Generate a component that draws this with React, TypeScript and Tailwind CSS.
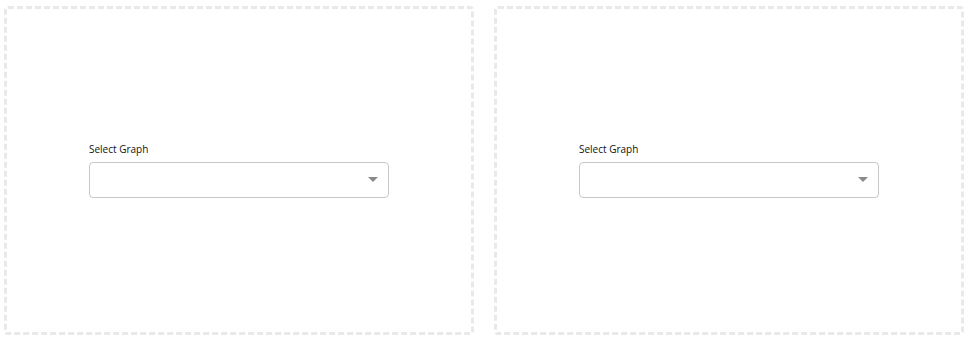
function GraphPanel() {
  return (
    <div className="flex h-[329px] w-[470px] items-center justify-center rounded-[4px] border-[3px] border-dashed border-[#e9e9e9] bg-white">
      <div className="mb-[2px] flex w-[300px] flex-col">
        <label className="mb-[5px] text-[10px] leading-[15px] text-[#111]">Select Graph</label>
        <div className="flex h-9 w-full items-center justify-end rounded-[4px] border border-[#c8c8c8] bg-white pr-[10px]">
          <svg width="10" height="5" viewBox="0 0 10 5">
            <path d="M0 0 L10 0 L5 5 Z" fill="#8a8a8a" />
          </svg>
        </div>
      </div>
    </div>
  )
}

export default function App() {
  return (
    <div className="flex h-[347px] w-[971px] gap-5 bg-white pl-1 pt-[6px] font-['Open_Sans',sans-serif]">
      <GraphPanel />
      <GraphPanel />
    </div>
  )
}
